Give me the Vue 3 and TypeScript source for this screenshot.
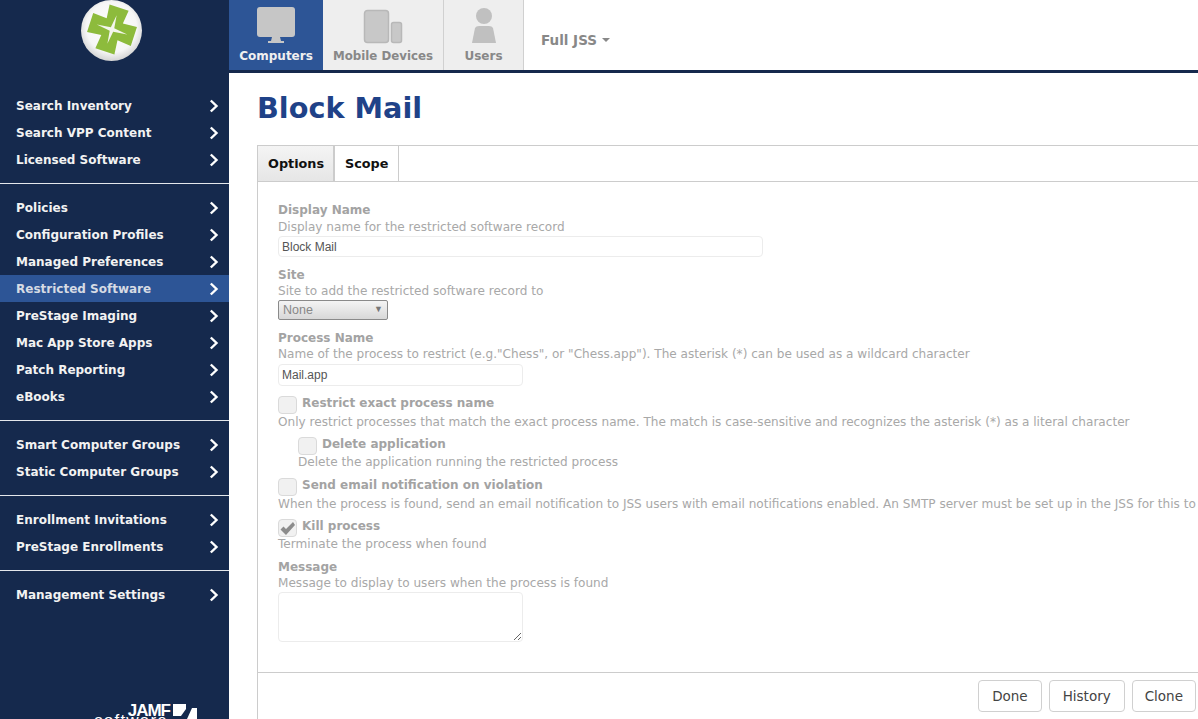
<template>
	<div class="page">
		<aside class="sidebar">
			<div class="logo-wrap">
				<svg class="logo" width="62" height="62" viewBox="0 0 62 62">
					<defs>
						<radialGradient id="disc" cx="50%" cy="45%" r="55%">
							<stop offset="0%" stop-color="#ffffff" />
							<stop offset="75%" stop-color="#f6f6f6" />
							<stop offset="100%" stop-color="#d4d4d4" />
						</radialGradient>
					</defs>
					<circle cx="30.500" cy="30.500" r="30.500" fill="url(#disc)" />
					<g transform="translate(31 29.500) rotate(18)">
						<path
							d="M-10 -23 L10 -23 L8.500 -9 L23 -10 L23 10 L8.500 8.500 L10 23 L-10 23 L-8.500 8.500 L-23 10 L-23 -10 L-8.500 -9 Z"
							fill="#8dbb3c"
						/>
						<path
							d="M0 -15 L1.800 -1.800 L16 0 L1.800 1.800 L0 15 L-1.800 1.800 L-16 0 L-1.800 -1.800 Z"
							fill="#f4f6ee"
						/>
					</g>
				</svg>
			</div>
			<nav v-for="(group, i) in navGroups" :key="i" class="nav-group">
				<div
					v-for="item in group"
					:key="item"
					class="nav-item"
					:class="{ active: item === 'Restricted Software' }"
				>
					<span>{{ item }}</span>
					<svg width="10" height="14" viewBox="0 0 10 14">
						<path d="M1.800 1.500 L7.500 7 L1.800 12.500" fill="none" stroke="#fff" stroke-width="2.400" />
					</svg>
				</div>
			</nav>
			<div class="brand">
				<div class="brand-top">
					<span class="brand-jamf">JAMF</span>
					<svg width="24" height="15" viewBox="0 0 24 15">
						<path d="M0 0 H13 V5 L8 12 H0 Z" fill="#fff" />
						<path d="M14 15 L19 4 H24 V15 Z" fill="#fff" />
					</svg>
				</div>
				<div class="brand-sub">software</div>
			</div>
		</aside>

		<div class="content">
			<header class="topbar">
				<div class="top-tab selected">
					<svg width="40" height="38" viewBox="0 0 40 38">
						<rect x="1" y="1" width="38" height="30" rx="3" fill="#c6c6c6" />
						<path d="M16 31 H24 L25 35 H28 V37 H12 V35 H15 Z" fill="#c6c6c6" />
					</svg>
					<span>Computers</span>
				</div>
				<div class="top-tab mobile">
					<svg width="40" height="38" viewBox="0 0 40 38">
						<rect x="1.500" y="4.500" width="24" height="32" rx="3" fill="#c8c8c8" stroke="#b8b8b8" stroke-width="1.500" />
						<rect x="28.500" y="16.500" width="10" height="20" rx="2" fill="#c8c8c8" stroke="#b8b8b8" stroke-width="1.500" />
					</svg>
					<span>Mobile Devices</span>
				</div>
				<div class="top-tab users">
					<svg width="40" height="38" viewBox="0 0 40 38">
						<circle cx="20" cy="10" r="8" fill="#c0c0c0" />
						<path d="M11 22 Q12 20 15 20 H25 Q28 20 29 22 L32 37 H8 Z" fill="#c0c0c0" />
					</svg>
					<span>Users</span>
				</div>
				<div class="jss">Full JSS<i class="caret"></i></div>
			</header>

			<main class="main">
				<h1>Block Mail</h1>
				<div class="panel">
					<div class="tabs">
						<div class="tab current">Options</div>
						<div class="tab">Scope</div>
					</div>
					<form class="form" @submit.prevent>
						<div class="field">
							<div class="label first">Display Name</div>
							<div class="desc">Display name for the restricted software record</div>
							<input class="input wide" type="text" value="Block Mail" disabled />
						</div>
						<div class="field site">
							<div class="label">Site</div>
							<div class="desc">Site to add the restricted software record to</div>
							<div class="select">None<i>▼</i></div>
						</div>
						<div class="field process">
							<div class="label">Process Name</div>
							<div class="desc">Name of the process to restrict (e.g."Chess", or "Chess.app"). The asterisk (*) can be used as a wildcard character</div>
							<input class="input" type="text" value="Mail.app" disabled />
						</div>
						<div
							v-for="c in checks"
							:key="c.label"
							class="check"
							:class="{ nested: c.nested, tall: c.tall }"
						>
							<div class="check-row">
								<span class="box">
									<svg v-if="c.checked" width="17" height="15" viewBox="0 0 17 15">
										<path d="M1.500 8.500 L4.500 5.500 L7 8 L14 1 L16 4 L7 14 Z" fill="#8c8c8c" />
									</svg>
								</span>
								<span class="label">{{ c.label }}</span>
							</div>
							<div class="desc">{{ c.desc }}</div>
						</div>
						<div class="field message">
							<div class="label">Message</div>
							<div class="desc">Message to display to users when the process is found</div>
							<textarea class="area" disabled></textarea>
						</div>
					</form>
					<div class="footer">
						<button type="button">Done</button>
						<button type="button">History</button>
						<button type="button">Clone</button>
					</div>
				</div>
			</main>
		</div>
	</div>
</template>

<script setup lang="ts">
type CheckRow = {
	label: string
	desc: string
	nested?: boolean
	checked?: boolean
	tall?: boolean
}

const navGroups: string[][] = [
	['Search Inventory', 'Search VPP Content', 'Licensed Software'],
	[
		'Policies',
		'Configuration Profiles',
		'Managed Preferences',
		'Restricted Software',
		'PreStage Imaging',
		'Mac App Store Apps',
		'Patch Reporting',
		'eBooks',
	],
	['Smart Computer Groups', 'Static Computer Groups'],
	['Enrollment Invitations', 'PreStage Enrollments'],
	['Management Settings'],
]

const checks: CheckRow[] = [
	{
		label: 'Restrict exact process name',
		desc: 'Only restrict processes that match the exact process name. The match is case-sensitive and recognizes the asterisk (*) as a literal character',
		tall: true,
	},
	{
		label: 'Delete application',
		desc: 'Delete the application running the restricted process',
		nested: true,
	},
	{
		label: 'Send email notification on violation',
		desc: 'When the process is found, send an email notification to JSS users with email notifications enabled. An SMTP server must be set up in the JSS for this to work',
		tall: true,
	},
	{
		label: 'Kill process',
		desc: 'Terminate the process when found',
		checked: true,
	},
]
</script>

<style>
html,
body {
	margin: 0;
	height: 100%;
	overflow: hidden;
	background: #fff;
}
</style>

<style scoped>
.page {
	display: flex;
	width: 1198px;
	height: 719px;
	overflow: hidden;
	font-family: "DejaVu Sans", sans-serif;
}

.sidebar {
	position: relative;
	flex: 0 0 229px;
	height: 719px;
	background: #15294d;
	overflow: hidden;
}

.logo-wrap {
	height: 92px;
	display: flex;
	justify-content: center;
	padding-right: 6px;
	box-sizing: border-box;
}

.logo {
	display: block;
}

.nav-group {
	padding: 0 0 10px;
	margin-bottom: 10px;
	border-bottom: 1px solid #e4e7ec;
}

.nav-group:last-of-type {
	border-bottom: 0;
}

.nav-item {
	display: flex;
	align-items: center;
	justify-content: space-between;
	height: 27px;
	padding: 0 10px 0 16px;
	font-size: 12px;
	font-weight: 700;
	color: #f2f2f2;
}

.nav-item.active {
	background: #2d5596;
	color: #d6dbe4;
}

.brand {
	position: absolute;
	right: 32px;
	top: 704px;
	display: flex;
	flex-direction: column;
	align-items: flex-end;
	color: #fff;
}

.brand-top {
	display: flex;
	align-items: flex-start;
	gap: 3px;
	height: 10px;
}

.brand-jamf {
	font-family: "Liberation Sans", sans-serif;
	font-size: 17px;
	font-weight: 700;
	line-height: 13px;
	letter-spacing: -1px;
}

.brand-sub {
	margin-right: 29px;
	font-family: "Liberation Sans", sans-serif;
	font-size: 17px;
	letter-spacing: 1.200px;
	line-height: 14px;
}

.content {
	flex: 1;
	min-width: 0;
	display: flex;
	flex-direction: column;
}

.topbar {
	flex: 0 0 70px;
	display: flex;
	border-bottom: 3px solid #15294d;
}

.top-tab {
	display: flex;
	flex-direction: column;
	align-items: center;
	justify-content: flex-end;
	height: 70px;
	padding: 0 0 6px;
	box-sizing: border-box;
	background: #eeeeee;
	border-right: 1px solid #d0d0d0;
	font-size: 12px;
	font-weight: 700;
	line-height: 16px;
	color: #888;
}

.top-tab svg {
	margin-bottom: 4px;
}

.top-tab.selected {
	background: #2d5596;
	color: #f0f0f0;
	border-right: 0;
	width: 94px;
}

.top-tab.mobile {
	width: 121px;
	font-size: 11.800px;
}

.top-tab.users {
	width: 80px;
}

.jss {
	display: flex;
	align-items: center;
	height: 70px;
	padding: 10px 0 0 17px;
	box-sizing: border-box;
	font-size: 13.500px;
	font-weight: 700;
	color: #888;
}

.caret {
	margin-left: 5px;
	border-left: 4px solid transparent;
	border-right: 4px solid transparent;
	border-top: 4px solid #888;
}

.main {
	flex: 1;
	min-height: 0;
	padding-left: 28px;
	display: flex;
	flex-direction: column;
}

h1 {
	margin: 0;
	padding-top: 17px;
	height: 55px;
	font-size: 28.700px;
	line-height: 36px;
	font-weight: 700;
	color: #1f4288;
}

.panel {
	flex: 1;
	display: flex;
	flex-direction: column;
	border-left: 1px solid #ccc;
	border-top: 1px solid #ccc;
	min-height: 0;
}

.tabs {
	display: flex;
	flex: 0 0 35px;
	border-bottom: 1px solid #ccc;
}

.tab {
	display: flex;
	align-items: center;
	padding: 0 10px;
	border-right: 1px solid #ccc;
	font-size: 12.800px;
	font-weight: 700;
	color: #111;
}

.tab.current {
	width: 77px;
	box-sizing: border-box;
	padding-right: 0;
	background: linear-gradient(#f4f4f4, #e6e6e6);
	border-right: 2px solid #ccc;
}

.form {
	flex: 1;
	padding: 20px 0 0 20px;
	min-width: 0;
	overflow: hidden;
}

.label {
	font-size: 12px;
	font-weight: 700;
	line-height: 16px;
	color: #a3a3a3;
}

.label.first {
	height: 17px;
}

.desc {
	font-size: 12.080px;
	line-height: 16px;
	color: #a8a8a8;
	white-space: nowrap;
}

.input {
	display: block;
	width: 245px;
	height: 22px;
	margin-top: 2px;
	padding: 0 3px;
	box-sizing: border-box;
	border: 1px solid #ececec;
	border-radius: 4px;
	background: #fff;
	font-family: "Liberation Sans", sans-serif;
	font-size: 12px;
	color: #555;
	-webkit-text-fill-color: #555;
	opacity: 1;
}

.input.wide {
	width: 485px;
	height: 21px;
	margin-top: 1px;
}

.site {
	margin-top: 10px;
}

.select {
	position: relative;
	width: 110px;
	height: 20px;
	box-sizing: border-box;
	margin-top: 1px;
	padding-left: 4px;
	border: 1px solid #8a8a8a;
	border-radius: 2px;
	background: linear-gradient(#f4f4f4, #d8d8d8);
	font-family: "Liberation Sans", sans-serif;
	font-size: 12.500px;
	line-height: 19px;
	color: #888;
}

.select i {
	position: absolute;
	right: 4px;
	top: 0;
	font-style: normal;
	font-size: 9px;
	line-height: 16px;
	color: #777;
}

.process {
	margin-top: 10px;
}

.check {
	margin-top: 6px;
}

.check.tall {
	margin-top: 7px;
}

.process + .check {
	margin-top: 9px;
}

.check.nested {
	margin-left: 20px;
}

.check-row {
	display: flex;
	align-items: flex-start;
	gap: 5px;
	height: 18px;
}

.check.tall .check-row {
	height: 19px;
}

.box {
	display: flex;
	align-items: center;
	justify-content: center;
	width: 19px;
	height: 18px;
	margin-top: 1px;
	box-sizing: border-box;
	border: 1px solid #dadada;
	border-radius: 4px;
	background: #f1f1f1;
}

.message {
	margin-top: 7px;
}

.area {
	display: block;
	width: 245px;
	height: 50px;
	margin-top: 1px;
	box-sizing: border-box;
	border: 1px solid #ececec;
	border-radius: 4px;
	background: #fff;
}

.footer {
	flex: 0 0 47px;
	display: flex;
	justify-content: flex-end;
	gap: 7px;
	padding: 7px 2px 0 0;
	box-sizing: border-box;
	border-top: 1px solid #ccc;
}

.footer button {
	height: 32px;
	padding: 0 13px;
	border: 1px solid #d0d0d0;
	border-radius: 4px;
	background: #fff;
	font-family: "DejaVu Sans", sans-serif;
	font-size: 13.500px;
	color: #444;
}

.footer button:last-child {
	padding: 0 12px;
}
</style>
